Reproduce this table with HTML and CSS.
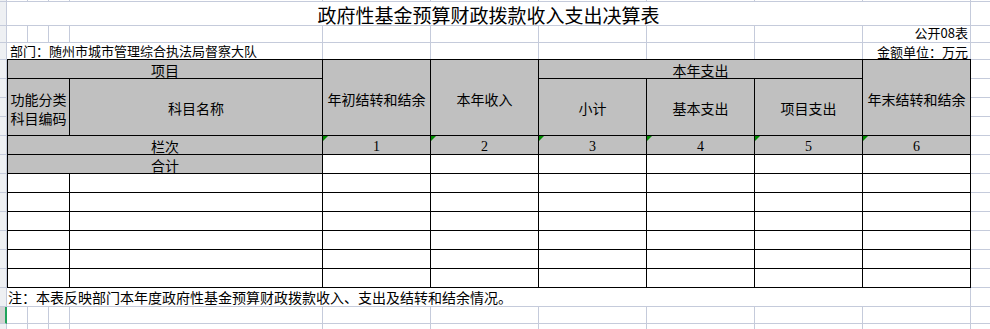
FILE: index.html
```html
<!DOCTYPE html>
<html lang="zh-CN">
<head>
<meta charset="utf-8">
<title>政府性基金预算财政拨款收入支出决算表</title>
<link rel="stylesheet" href="styles.css">
</head>
<body>
<div class="sheet">
  <div class="rowhead">
    <div class="seg h2"></div>
    <div class="seg h24"></div>
    <div class="seg h17"></div>
    <div class="seg h17"></div>
    <div class="seg h19"></div><div class="seg h19"></div><div class="seg h19"></div><div class="seg h19"></div>
    <div class="seg h19"></div><div class="seg h19"></div><div class="seg h19"></div><div class="seg h19"></div>
    <div class="seg h19"></div><div class="seg h19"></div><div class="seg h19"></div><div class="seg h19"></div>
    <div class="seg h19"></div>
    <div class="seg h17 sel"></div>
    <div class="seg h17"></div>
  </div>

  <div class="content">
    <div class="gridrow top">
      <div class="gc"></div><div class="gc"></div><div class="gc"></div><div class="gc"></div><div class="gc"></div>
      <div class="gc"></div><div class="gc"></div><div class="gc"></div><div class="gc"></div><div class="gc"></div>
    </div>
    <div class="title">政府性基金预算财政拨款收入支出决算表</div>
    <div class="gridrow r17">
      <div class="gc"></div><div class="gc"></div><div class="gc"></div><div class="gc"></div><div class="gc"></div>
      <div class="gc"></div><div class="gc"></div><div class="gc"></div><div class="gc"></div>
      <div class="gc right up"><span class="txt">公开08表</span></div>
    </div>
    <div class="gridrow r16">
      <div class="gc span4 left up"><span class="txt">部门：随州市城市管理综合执法局督察大队</span></div>
      <div class="gc"></div><div class="gc"></div><div class="gc"></div><div class="gc"></div><div class="gc"></div>
      <div class="gc right"><span class="txt">金额单位：万元</span></div>
    </div>

    <div class="table">
      <div class="c g" style="grid-column:1/3;grid-row:1">项目</div>
      <div class="c g" style="grid-column:3;grid-row:1/5">年初结转和结余</div>
      <div class="c g" style="grid-column:4;grid-row:1/5">本年收入</div>
      <div class="c g" style="grid-column:5/8;grid-row:1">本年支出</div>
      <div class="c g" style="grid-column:8;grid-row:1/5">年末结转和结余</div>
      <div class="c g wrap" style="grid-column:1;grid-row:2/5">功能分类科目编码</div>
      <div class="c g" style="grid-column:2;grid-row:2/5">科目名称</div>
      <div class="c g" style="grid-column:5;grid-row:2/5">小计</div>
      <div class="c g" style="grid-column:6;grid-row:2/5">基本支出</div>
      <div class="c g" style="grid-column:7;grid-row:2/5">项目支出</div>

      <div class="c g" style="grid-column:1/3">栏次</div>
      <div class="c g num mark">1</div>
      <div class="c g num mark">2</div>
      <div class="c g num mark">3</div>
      <div class="c g num mark">4</div>
      <div class="c g num mark">5</div>
      <div class="c g num mark">6</div>

      <div class="c g" style="grid-column:1/3">合计</div>
      <div class="c"></div><div class="c"></div><div class="c"></div><div class="c"></div><div class="c"></div><div class="c"></div>

      <div class="c"></div><div class="c"></div><div class="c"></div><div class="c"></div><div class="c"></div><div class="c"></div><div class="c"></div><div class="c"></div>
      <div class="c"></div><div class="c"></div><div class="c"></div><div class="c"></div><div class="c"></div><div class="c"></div><div class="c"></div><div class="c"></div>
      <div class="c"></div><div class="c"></div><div class="c"></div><div class="c"></div><div class="c"></div><div class="c"></div><div class="c"></div><div class="c"></div>
      <div class="c"></div><div class="c"></div><div class="c"></div><div class="c"></div><div class="c"></div><div class="c"></div><div class="c"></div><div class="c"></div>
      <div class="c"></div><div class="c"></div><div class="c"></div><div class="c"></div><div class="c"></div><div class="c"></div><div class="c"></div><div class="c"></div>
      <div class="c"></div><div class="c"></div><div class="c"></div><div class="c"></div><div class="c"></div><div class="c"></div><div class="c"></div><div class="c"></div>
    </div>

    <div class="note">注：本表反映部门本年度政府性基金预算财政拨款收入、支出及结转和结余情况。</div>
    <div class="gridrow r17 bottom">
      <div class="gc"></div><div class="gc"></div><div class="gc"></div><div class="gc"></div><div class="gc"></div>
      <div class="gc"></div><div class="gc"></div><div class="gc"></div><div class="gc"></div><div class="gc"></div>
    </div>
    <div class="gridrow r17 bottom">
      <div class="gc"></div><div class="gc"></div><div class="gc"></div><div class="gc"></div><div class="gc"></div>
      <div class="gc"></div><div class="gc"></div><div class="gc"></div><div class="gc"></div><div class="gc"></div>
    </div>
  </div>

  <div class="rightcol">
    <div class="seg h2"></div>
    <div class="seg h24"></div>
    <div class="seg h17"></div>
    <div class="seg h17"></div>
    <div class="seg h19"></div><div class="seg h19"></div><div class="seg h19"></div><div class="seg h19"></div>
    <div class="seg h19"></div><div class="seg h19"></div><div class="seg h19"></div><div class="seg h19"></div>
    <div class="seg h19"></div><div class="seg h19"></div><div class="seg h19"></div><div class="seg h19"></div>
    <div class="seg h19"></div>
    <div class="seg h17"></div>
    <div class="seg h17"></div>
  </div>
</div>
</body>
</html>
```

FILE: styles.css
```css
* { box-sizing: border-box; }

html, body {
  margin: 0;
  padding: 0;
  background: #ffffff;
  overflow: hidden;
}

body {
  width: 990px;
  height: 329px;
  font-family: "Noto Sans CJK SC", "Noto Sans", sans-serif;
  color: #000;
}

.sheet {
  display: flex;
  align-items: flex-start;
  width: 990px;
  height: 329px;
  overflow: hidden;
}

/* ---------- side strips ---------- */
.rowhead {
  width: 7px;
  display: flex;
  flex-direction: column;
  flex: none;
}
.rowhead .seg {
  background: #eef0f3;
  border-right: 1px solid #c5cbdb;
}
.rowhead .seg.sel {
  background: #d2d2d2;
  border-right: 2px solid #1fa35b;
}
.rightcol {
  flex: 1;
  display: flex;
  flex-direction: column;
}
.seg { border-bottom: 1px solid #c5cbdb; }
.h2 { height: 2px; }
.h17 { height: 17px; }
.h19 { height: 19px; }
.h24 { height: 24px; }

/* ---------- main content ---------- */
.content {
  width: 964px;
  flex: none;
  display: flex;
  flex-direction: column;
}

.gridrow {
  display: grid;
  grid-template-columns: 21px 21px 21px 253px repeat(6, 108px);
}
.gridrow .gc {
  border-right: 1px solid #c5cbdb;
  font-size: 13px;
  white-space: nowrap;
  display: flex;
  align-items: flex-end;
  overflow: visible;
}
.gc .txt {
  display: block;
  line-height: 14px;
  height: 14px;
}
.gridrow.top { height: 2px; }
.gridrow.top .gc { border-bottom: 1px solid #c5cbdb; }
.gridrow.r17 { height: 17px; }
.gridrow.r17 .gc { border-bottom: 1px solid #c5cbdb; padding-bottom: 1px; }
.gridrow.r17 .gc.up { padding-bottom: 2px; }
.gridrow.r16 { height: 16px; }
.gridrow.r16 .gc.up { padding-bottom: 1px; }
.gc.span4 { grid-column: 1 / 5; }
.gc.left { padding-left: 3px; justify-content: flex-start; }
.gc.right { justify-content: flex-end; padding-right: 2px; }

.title {
  height: 24px;
  border-right: 1px solid #c5cbdb;
  border-bottom: 1px solid #c5cbdb;
  text-align: center;
  font-size: 19px;
  line-height: 24px;
  padding-top: 1px;
}

/* ---------- table ---------- */
.table {
  display: grid;
  grid-template-columns: 61px 252px repeat(6, 107px);
  grid-template-rows: repeat(12, 18px);
  gap: 1px;
  padding: 1px;
  background: #000;
  width: 964px;
}
.c {
  background: #ffffff;
  display: flex;
  align-items: center;
  justify-content: center;
  font-size: 14px;
  line-height: 15px;
  padding-top: 3px;
  white-space: nowrap;
  position: relative;
}
.c.g { background: #c0c0c0; }
.c.wrap {
  white-space: normal;
  text-align: center;
  padding: 3px 2px 0;
  line-height: 19px;
}
.c.num {
  font-family: "Liberation Serif", "DejaVu Serif", serif;
  font-size: 14px;
}
.c.mark::before {
  content: "";
  position: absolute;
  left: 0;
  top: 0;
  width: 5px;
  height: 5px;
  background: #008a00;
  clip-path: polygon(0 0, 100% 0, 0 100%);
}

.note {
  height: 19px;
  border-right: 1px solid #c5cbdb;
  border-bottom: 1px solid #c5cbdb;
  font-size: 14px;
  line-height: 18px;
  padding-left: 1px;
  white-space: nowrap;
}
```
